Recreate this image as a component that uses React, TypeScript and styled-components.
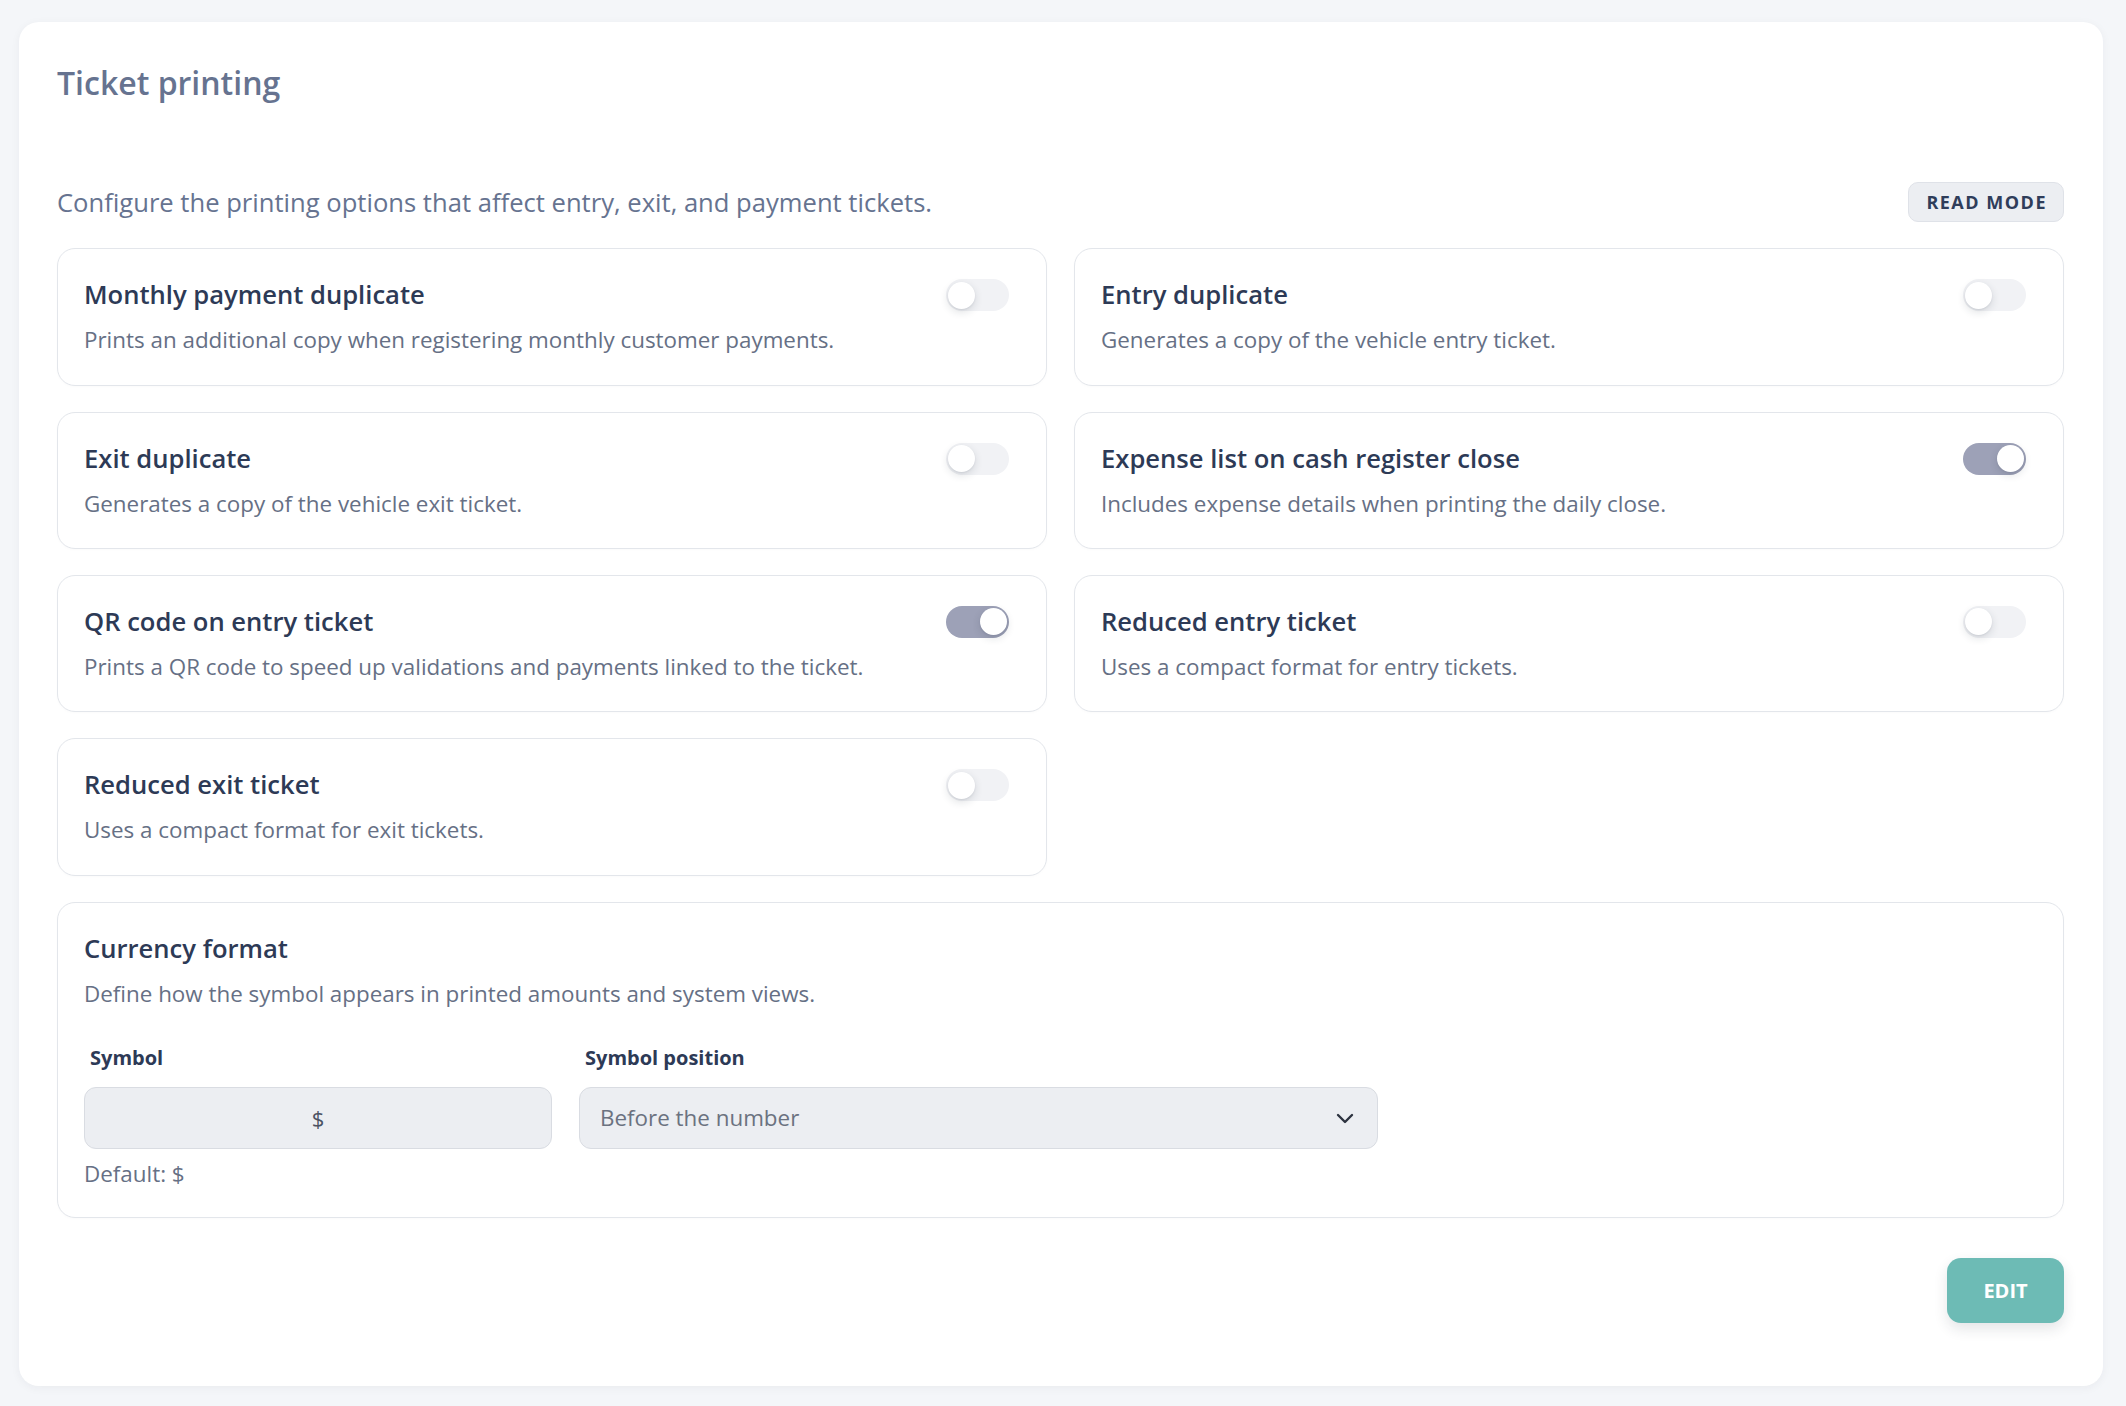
import React, { useState } from "react";
import styled, { createGlobalStyle } from "styled-components";

const GlobalStyle = createGlobalStyle`
  * { box-sizing: border-box; }
  html, body { margin: 0; padding: 0; }
  body {
    background: #f4f6f9;
    font-family: "Open Sans", "Noto Sans", Arial, sans-serif;
    -webkit-font-smoothing: antialiased;
  }
`;

const Page = styled.div`
  padding: 22px 23px 19px 19px;
  min-height: 1406px;
`;

const Panel = styled.section`
  background: #ffffff;
  border-radius: 20px;
  box-shadow: 0 2px 10px rgba(30, 41, 59, 0.05);
  padding: 42px 39px 63px 38px;
  display: flex;
  flex-direction: column;
`;

const PageTitle = styled.h1`
  margin: 0 0 80px;
  font-size: 32px;
  line-height: 1.2;
  font-weight: 600;
  color: #667390;
`;

const HeaderRow = styled.div`
  display: flex;
  align-items: center;
  justify-content: space-between;
  margin-bottom: 26px;
`;

const Intro = styled.p`
  margin: 0;
  font-size: 25.6px;
  line-height: 39px;
  color: #667390;
`;

const Badge = styled.span`
  display: inline-flex;
  align-items: center;
  height: 40px;
  padding: 0 16px 0 17px;
  border-radius: 10px;
  background: #eceef2;
  border: 1px solid #dfe2e8;
  font-size: 18px;
  font-weight: 700;
  letter-spacing: 1.5px;
  color: #2f3d5a;
`;

const Grid = styled.div`
  display: grid;
  grid-template-columns: 1fr 1fr;
  column-gap: 27px;
  row-gap: 26px;
`;

const OptionCard = styled.div`
  border: 1px solid #e3e6eb;
  border-radius: 18px;
  background: #ffffff;
  padding: 28px 26px;
  box-shadow: 0 1px 3px rgba(30, 41, 59, 0.02);
`;

const OptionHead = styled.div`
  display: flex;
  align-items: center;
  justify-content: space-between;
  gap: 20px;
`;

const OptionTitle = styled.h3`
  margin: 0;
  font-size: 25.6px;
  line-height: 36px;
  font-weight: 600;
  color: #2d3a56;
`;

const OptionDesc = styled.p`
  margin: 10px 0 0;
  font-size: 22.4px;
  line-height: 33.3px;
  color: #667085;
`;

const Track = styled.button<{ $on: boolean }>`
  position: relative;
  flex: none;
  width: 63px;
  height: 32px;
  margin-right: 11px;
  padding: 0;
  border: none;
  border-radius: 16px;
  background: ${(p) => (p.$on ? "#9da1b7" : "#f1f2f5")};
  cursor: pointer;
`;

const Thumb = styled.span<{ $on: boolean }>`
  position: absolute;
  top: 2.5px;
  left: ${(p) => (p.$on ? "34px" : "2px")};
  width: 27px;
  height: 27px;
  border-radius: 50%;
  background: #ffffff;
  box-shadow: 0 3px 8px rgba(30, 41, 59, 0.14), 0 1px 2px rgba(30, 41, 59, 0.08);
`;

const CurrencyCard = styled(OptionCard)`
  margin-top: 26px;
  padding-bottom: 27px;
`;

const FieldRow = styled.div`
  display: flex;
  gap: 27px;
  margin-top: 33px;
`;

const Field = styled.div<{ $w: number }>`
  width: ${(p) => p.$w}px;
  display: flex;
  flex-direction: column;
`;

const Label = styled.label`
  padding-left: 6px;
  margin-bottom: 14px;
  font-size: 20px;
  line-height: 1.5;
  font-weight: 700;
  color: #2d3a56;
`;

const Input = styled.div`
  height: 62px;
  border-radius: 12px;
  background: #eceef2;
  border: 1px solid #d9dce2;
  display: flex;
  align-items: center;
  justify-content: center;
  font-size: 22px;
  color: #4b5263;
`;

const Select = styled.div`
  height: 62px;
  border-radius: 12px;
  background: #eceef2;
  border: 1px solid #d9dce2;
  display: flex;
  align-items: center;
  justify-content: space-between;
  padding: 0 20px 0 20px;
  font-size: 22.4px;
  color: #6b7280;
`;

const Hint = styled.div`
  margin-top: 8px;
  font-size: 22.4px;
  line-height: 33px;
  color: #667085;
`;

const Footer = styled.div`
  display: flex;
  justify-content: flex-end;
  margin-top: 40px;
`;

const EditButton = styled.button`
  width: 117px;
  height: 65px;
  border: none;
  border-radius: 14px;
  background: #6dbbb5;
  color: #ffffff;
  font-family: inherit;
  font-size: 20px;
  font-weight: 700;
  box-shadow: 0 6px 14px rgba(30, 41, 59, 0.12);
  cursor: pointer;
`;

const options = [
  { title: "Monthly payment duplicate", desc: "Prints an additional copy when registering monthly customer payments.", on: false },
  { title: "Entry duplicate", desc: "Generates a copy of the vehicle entry ticket.", on: false },
  { title: "Exit duplicate", desc: "Generates a copy of the vehicle exit ticket.", on: false },
  { title: "Expense list on cash register close", desc: "Includes expense details when printing the daily close.", on: true },
  { title: "QR code on entry ticket", desc: "Prints a QR code to speed up validations and payments linked to the ticket.", on: true },
  { title: "Reduced entry ticket", desc: "Uses a compact format for entry tickets.", on: false },
  { title: "Reduced exit ticket", desc: "Uses a compact format for exit tickets.", on: false },
];

const Toggle = ({ on }: { on: boolean }) => (
  <Track $on={on} aria-pressed={on}>
    <Thumb $on={on} />
  </Track>
);

const Chevron = () => (
  <svg width="24" height="24" viewBox="0 0 24 24" fill="none" stroke="#2d3340" strokeWidth="2.4" strokeLinecap="round" strokeLinejoin="round">
    <polyline points="5 9 12 16 19 9" />
  </svg>
);

export default function App() {
  const [items] = useState(options);
  return (
    <Page>
      <GlobalStyle />
      <Panel>
        <PageTitle>Ticket printing</PageTitle>
        <HeaderRow>
          <Intro>Configure the printing options that affect entry, exit, and payment tickets.</Intro>
          <Badge>READ MODE</Badge>
        </HeaderRow>
        <Grid>
          {items.map((o) => (
            <OptionCard key={o.title}>
              <OptionHead>
                <OptionTitle>{o.title}</OptionTitle>
                <Toggle on={o.on} />
              </OptionHead>
              <OptionDesc>{o.desc}</OptionDesc>
            </OptionCard>
          ))}
        </Grid>
        <CurrencyCard>
          <OptionTitle>Currency format</OptionTitle>
          <OptionDesc>Define how the symbol appears in printed amounts and system views.</OptionDesc>
          <FieldRow>
            <Field $w={468}>
              <Label>Symbol</Label>
              <Input>$</Input>
              <Hint>Default: $</Hint>
            </Field>
            <Field $w={799}>
              <Label>Symbol position</Label>
              <Select>
                <span>Before the number</span>
                <Chevron />
              </Select>
            </Field>
          </FieldRow>
        </CurrencyCard>
        <Footer>
          <EditButton>EDIT</EditButton>
        </Footer>
      </Panel>
    </Page>
  );
}
